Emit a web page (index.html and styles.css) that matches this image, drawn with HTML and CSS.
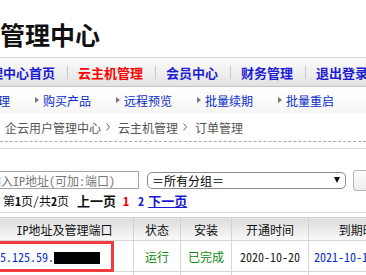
FILE: index.html
```html
<!DOCTYPE html>
<html lang="zh-CN">
<head>
    <meta charset="UTF-8">
    <meta name="viewport" content="width=device-width, initial-scale=1.0">
    <title>订单管理</title>
    <link rel="stylesheet" href="styles.css">
</head>
<body>
    <div id="container">
        <div id="header">
            <div class="logoText">管理中心</div>
        </div>
        <div id="mainNav">
            <a class="navItem">管理中心首页</a>
            <span class="navSep"></span>
            <a class="navItem current">云主机管理</a>
            <span class="navSep"></span>
            <a class="navItem">会员中心</a>
            <span class="navSep"></span>
            <a class="navItem">财务管理</a>
            <span class="navSep"></span>
            <a class="navItem">退出登录</a>
        </div>
        <div id="subNav">
            <a class="subItem"><i class="tri"></i>订单管理</a>
            <a class="subItem"><i class="tri"></i>购买产品</a>
            <a class="subItem"><i class="tri"></i>远程预览</a>
            <a class="subItem"><i class="tri"></i>批量续期</a>
            <a class="subItem"><i class="tri"></i>批量重启</a>
        </div>
        <div id="crumbs">
            <span class="crumbLabel">当前位置：</span>
            <span>企云用户管理中心</span>
            <svg class="chevron" width="4" height="8" viewBox="0 0 4 8"><polyline points="0.5,0.5 3.5,4 0.5,7.5" fill="none" stroke="#666" stroke-width="1"/></svg>
            <span>云主机管理</span>
            <svg class="chevron" width="4" height="8" viewBox="0 0 4 8"><polyline points="0.5,0.5 3.5,4 0.5,7.5" fill="none" stroke="#666" stroke-width="1"/></svg>
            <span>订单管理</span>
        </div>
        <div id="content">
            <div class="searchRow">
                <input class="searchInput" type="text" placeholder="输入IP地址(可加:端口)">
                <div class="groupSelect">
                    <span>＝所有分组＝</span>
                    <span class="caret"></span>
                </div>
                <div class="searchButton">搜索</div>
            </div>
            <div class="pager">
                <span class="pageInfo">第<b>1</b>页/共<b>2</b>页</span>
                <b class="pagePrev">上一页</b>
                <span class="pageNow">1</span>
                <a class="pageNum">2</a>
                <a class="pageNext">下一页</a>
            </div>
            <div class="tableWrap">
                <table id="orders">
                    <tr>
                        <th class="colIp">IP地址及管理端口</th>
                        <th class="colState">状态</th>
                        <th class="colSetup">安装</th>
                        <th class="colOpen">开通时间</th>
                        <th class="colEnd">到期时间</th>
                    </tr>
                    <tr>
                        <td class="ipCell">
                            <span class="ipText">45.125.59.</span><span class="redact"></span>
                            <div class="mark"></div>
                        </td>
                        <td class="green">运行</td>
                        <td class="green">已完成</td>
                        <td>2020-10-20</td>
                        <td class="endCell">2021-10-19</td>
                    </tr>
                    <tr>
                        <td class="ipCell"></td>
                        <td></td>
                        <td></td>
                        <td></td>
                        <td></td>
                    </tr>
                </table>
            </div>
        </div>
    </div>
</body>
</html>
```

FILE: styles.css
```css
* {
    margin: 0;
    padding: 0;
    box-sizing: border-box;
}
body {
    font-family: "Noto Sans Mono CJK SC", "Noto Sans CJK SC", sans-serif;
    font-size: 12px;
    color: #222;
    background-color: #fff;
    overflow: hidden;
}
a {
    text-decoration: none;
}
#container {
    width: 366px;
    overflow: hidden;
}
#header {
    height: 57px;
    padding-top: 19px;
}
.logoText {
    font-size: 25px;
    font-weight: bold;
    line-height: 30px;
    color: #111;
}
#mainNav {
    height: 30px;
    display: flex;
    align-items: center;
    margin-left: -23px;
    border-top: 1px solid #d2d2d2;
    border-bottom: 1px solid #c4c4c4;
    background: linear-gradient(#fdfdfd, #e2e2e2);
}
.navItem {
    flex-shrink: 0;
    white-space: nowrap;
    font-size: 13px;
    font-weight: bold;
    color: #1c1cd4;
}
.navItem.current {
    color: #f00;
}
.navSep {
    flex-shrink: 0;
    width: 1px;
    height: 13px;
    margin: 0 10px 0 12px;
    background-color: #c8c8c8;
}
#subNav {
    height: 26px;
    display: flex;
    align-items: center;
    gap: 25px;
    margin-left: -46px;
    background: linear-gradient(#fff, #f6f6f6);
}
.subItem {
    flex-shrink: 0;
    display: flex;
    align-items: center;
    white-space: nowrap;
    color: #0a2fc8;
}
.tri {
    width: 0;
    height: 0;
    margin-right: 4px;
    border-top: 3.5px solid transparent;
    border-bottom: 3.5px solid transparent;
    border-left: 4px solid #777;
}
#crumbs {
    height: 29px;
    display: flex;
    align-items: center;
    margin-left: -60px;
    white-space: nowrap;
    color: #555;
    border-bottom: 1px dashed #aaa;
}
.crumbLabel {
    margin-right: 5px;
}
.chevron {
    flex-shrink: 0;
    margin: 0 8px 0 5px;
}
#content {
    margin-top: 6px;
    border-top: 1px solid #dcdcdc;
    padding-top: 20px;
}
.searchRow {
    display: flex;
    align-items: center;
    gap: 8px;
    margin-left: -15px;
    height: 22px;
}
.searchInput {
    flex-shrink: 0;
    width: 154px;
    height: 18px;
    padding-left: 3px;
    border: 1px solid #a5a5a5;
    font-family: inherit;
    font-size: 12px;
    outline: none;
}
.searchInput::placeholder {
    color: #777;
}
.groupSelect {
    flex-shrink: 0;
    width: 199px;
    height: 17px;
    display: flex;
    align-items: center;
    justify-content: space-between;
    padding: 0 5px 0 4px;
    border: 1px solid #8a8a8a;
    border-radius: 5px;
    color: #000;
    white-space: nowrap;
}
.caret {
    width: 0;
    height: 0;
    border-left: 3.5px solid transparent;
    border-right: 3.5px solid transparent;
    border-top: 6px solid #111;
}
.searchButton {
    flex-shrink: 0;
    width: 70px;
    height: 21px;
    margin-left: -1px;
    border: 1px solid #b5b5b5;
    border-radius: 3px;
    background: linear-gradient(#fdfdfd, #ececec);
    text-align: center;
    line-height: 19px;
}
.pager {
    display: flex;
    align-items: center;
    height: 16px;
    margin-top: 1px;
    margin-left: 3px;
    color: #111;
    white-space: nowrap;
}
.pageInfo {
    flex-shrink: 0;
}
.pagePrev {
    flex-shrink: 0;
    margin-left: 8px;
    font-size: 13px;
}
.pageNow {
    flex-shrink: 0;
    margin-left: 7px;
    color: #e00;
    font-weight: bold;
}
.pageNum {
    flex-shrink: 0;
    margin-left: 9px;
    color: #1a1ad6;
    font-weight: bold;
}
.pageNext {
    flex-shrink: 0;
    margin-left: 4px;
    font-size: 13px;
    font-weight: bold;
    color: #1a1ad6;
    text-decoration: underline;
}
.tableWrap {
    margin-top: 4px;
    padding-top: 4px;
    border-top: 1px solid #dedede;
    margin-left: -12px;
}
#orders {
    border-collapse: collapse;
    table-layout: fixed;
    width: 428px;
}
#orders th {
    height: 23px;
    font-weight: normal;
    color: #111;
    background: linear-gradient(#dcdcdc, #fafafa);
    border-left: 1px solid #d2d2d2;
    border-top: 1px solid #d2d2d2;
    text-align: center;
}
#orders td {
    height: 31px;
    text-align: center;
    border-left: 1px solid #d6d6d6;
    border-top: 1px solid #d6d6d6;
    white-space: nowrap;
}
.colIp {
    width: 145px;
    padding-left: 7px;
}
.colState {
    width: 47px;
}
.colSetup {
    width: 51px;
}
.colOpen {
    width: 77px;
}
.colEnd {
    width: 108px;
}
#orders .ipCell {
    position: relative;
    text-align: left;
    padding-left: 5px;
}
.ipText {
    color: #0a2fc8;
}
.redact {
    display: inline-block;
    width: 46px;
    height: 12px;
    vertical-align: -2px;
    background-color: #000;
}
.mark {
    position: absolute;
    left: 0;
    top: 0;
    width: 125px;
    height: 31px;
    border: 3px solid #f23b3f;
}
.green {
    color: #118811;
}
#orders .endCell {
    text-align: left;
    padding-left: 5px;
    color: #0a2fc8;
}
```
